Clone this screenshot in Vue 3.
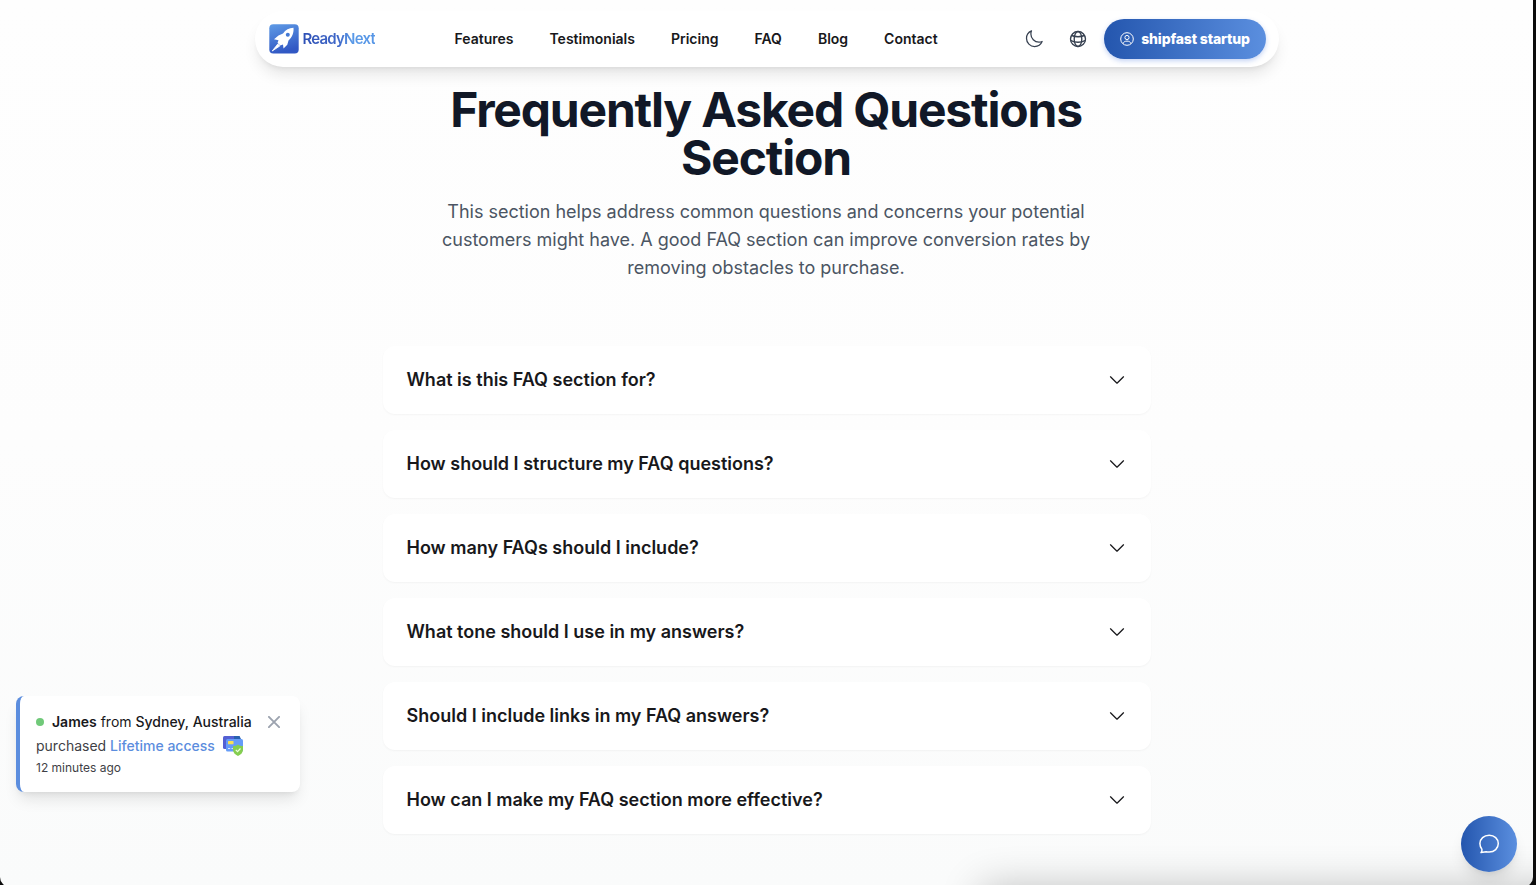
<script setup>
const links = ['Features', 'Testimonials', 'Pricing', 'FAQ', 'Blog', 'Contact']
const questions = [
  'What is this FAQ section for?',
  'How should I structure my FAQ questions?',
  'How many FAQs should I include?',
  'What tone should I use in my answers?',
  'Should I include links in my FAQ answers?',
  'How can I make my FAQ section more effective?',
]
</script>

<template>
  <div class="screen">
    <div class="page">
      <header class="nav">
        <a class="logo">
          <svg class="logo-mark" width="30" height="30" viewBox="0 0 30 30">
            <defs>
              <linearGradient id="mark" x1="0" y1="0" x2="0.3" y2="1">
                <stop offset="0" stop-color="#5f9be6" />
                <stop offset="1" stop-color="#3158c4" />
              </linearGradient>
            </defs>
            <rect x="0.3" y="0.3" width="29.4" height="29.2" rx="4" fill="url(#mark)" />
            <path d="M24.500 3.800C20 3.800 16.500 6 14 9.500L9.500 11.500L5 15.300L9.500 16.300L8.500 19L11.200 21.500L14 20.500L14.500 24.500L18.300 20.800L19.500 16.500C23 13.500 25 9 24.500 3.800Z" fill="#fff" />
            <path d="M8.800 20L3.200 27L10.800 22Z" fill="#fff" stroke="#fff" stroke-width="0.800" />
            <circle cx="18.800" cy="10.800" r="2" fill="#4379d5" />
          </svg>
          <span class="logo-text">ReadyNext</span>
        </a>
        <nav class="links">
          <a v-for="l in links" :key="l">{{ l }}</a>
        </nav>
        <div class="actions">
          <svg class="moon" width="20" height="20" viewBox="0 0 24 24" fill="none" stroke="#374151" stroke-width="1.5" stroke-linecap="round" stroke-linejoin="round">
            <path d="M21.752 15.002A9.720 9.720 0 0 1 18 15.750c-5.385 0-9.750-4.365-9.750-9.750 0-1.330.266-2.597.748-3.752A9.753 9.753 0 0 0 3 11.250C3 16.635 7.365 21 12.750 21a9.753 9.753 0 0 0 9.002-5.998Z" />
          </svg>
          <svg class="globe" width="18" height="18" viewBox="0 0 18 18" fill="none" stroke="#374151" stroke-width="1.350">
            <circle cx="9" cy="9" r="7.500" />
            <ellipse cx="9" cy="9" rx="3.800" ry="7.500" />
            <path d="M2.500 5.500c3.500 1.300 9.500 1.300 13 0M1.500 10.300c4.500 2.300 10.500 2.300 15 0" />
          </svg>
          <button class="account">
            <svg width="14" height="14" viewBox="0 0 14 14" fill="none" stroke="#fff" stroke-width="1">
              <circle cx="7" cy="7" r="6.300" />
              <circle cx="7" cy="5.500" r="2.100" />
              <path d="M3.200 11.600C3.500 9.900 5 9.100 7 9.100s3.500.800 3.800 2.500" />
            </svg>
            <span>shipfast startup</span>
          </button>
        </div>
      </header>

      <main class="faq">
        <h1>Frequently Asked Questions Section</h1>
        <p class="intro">
          This section helps address common questions and concerns your potential customers might have. A good FAQ section can improve conversion rates by removing obstacles to purchase.
        </p>
        <div class="list">
          <div v-for="q in questions" :key="q" class="item">
            <h3>{{ q }}</h3>
            <svg width="20" height="20" viewBox="0 0 20 20" fill="none" stroke="#18181b" stroke-width="1.250" stroke-linecap="round" stroke-linejoin="round">
              <path d="M3.500 6.800l6.500 6.400L16.500 6.800" />
            </svg>
          </div>
        </div>
      </main>

      <div class="under-shadow"></div>

      <aside class="toast">
        <div class="toast-body">
          <div class="line who"><i class="dot"></i><span class="copy"><b>James</b> from <em>Sydney, Australia</em></span></div>
          <div class="line what">
            <span class="copy">purchased <strong>Lifetime access</strong></span>
            <svg width="20" height="20" viewBox="0 0 20 20">
              <rect x="0" y="0" width="17" height="13" rx="1.500" fill="#5460d3" />
              <path d="M11 0h5.500L18 3h-7z" fill="#2862b0" />
              <rect x="3" y="3" width="17" height="12.500" rx="1.500" fill="#659cf8" />
              <rect x="5" y="5" width="5.500" height="3.200" rx="0.500" fill="#f7df55" />
              <path d="M5 12.500h2.200M8.500 12.500h2" stroke="#d5e5ff" stroke-width="1" />
              <path d="M15 8.500c1.500 1.100 3 1.500 5 1.500v3.500c0 3-2 5.200-5 6.500-3-1.300-5-3.500-5-6.500V10c2 0 3.500-.400 5-1.500Z" fill="#85ce50" />
              <path d="M12.800 13.900l1.700 1.700 3-3.100" fill="none" stroke="#efffe0" stroke-width="1.200" />
            </svg>
          </div>
          <div class="when">12 minutes ago</div>
        </div>
        <svg class="close" width="12" height="12" viewBox="0 0 12 12" stroke="#9ca3af" stroke-width="1.900" stroke-linecap="round">
          <path d="M.900.900l10.200 10.200M11.100.900L.900 11.100" />
        </svg>
      </aside>

      <button class="chat">
        <svg width="22" height="22" viewBox="0 0 22 22" fill="none" stroke="#fff" stroke-width="1.500" stroke-linejoin="round">
          <path d="M11.200 2.200c5.200 0 9.100 3.600 9.100 8.400s-3.900 8.400-9.100 8.400c-1.100 0-2 0-3-.200L3 19.600c.900-1.200 1.200-2.200.900-3.400C2.600 14.700 1.900 12.800 1.900 10.600c0-4.800 4-8.400 9.300-8.400Z" />
        </svg>
      </button>
    </div>
  </div>
</template>

<style>
body {
  margin: 0;
  background: #0c0c0c;
}
</style>

<style scoped>
.screen {
  width: 1536px;
  height: 885px;
  overflow: hidden;
  background: #0c0c0c;
  font-family: Inter, "Liberation Sans", sans-serif;
  color: #18181b;
}
.page {
  position: relative;
  box-sizing: border-box;
  width: 1533px;
  height: 887px;
  padding-top: 11px;
  overflow: hidden;
  border-radius: 0 0 10px 10px;
  background: linear-gradient(#fefefe, #fdfdfd 50%, #fafbfb);
}
.nav {
  position: relative;
  z-index: 2;
  box-sizing: border-box;
  display: flex;
  align-items: center;
  width: 1024px;
  height: 56px;
  margin: 0 auto;
  padding: 0 13px 0 14px;
  border-radius: 28px;
  background: #fff;
  box-shadow: 0 10px 15px -3px rgba(0, 0, 0, 0.1), 0 4px 6px -4px rgba(0, 0, 0, 0.1);
}
.logo {
  display: flex;
  align-items: center;
  gap: 4px;
  width: 186px;
}
.logo-text {
  font-size: 15px;
  font-weight: 600;
  letter-spacing: -0.8px;
  line-height: 20px;
  background: linear-gradient(90deg, #2e50b5 0%, #3f68c9 50%, #5a9ae8 68%, #5796e6 100%);
  background-clip: text;
  -webkit-background-clip: text;
  color: transparent;
}
.links {
  display: flex;
  gap: 36px;
  font-size: 14px;
  font-weight: 600;
  line-height: 20px;
}
.actions {
  display: flex;
  align-items: center;
  margin-left: auto;
}
.moon {
  margin-right: 25px;
}
.globe {
  margin-right: 17px;
}
.account {
  display: flex;
  align-items: center;
  justify-content: center;
  gap: 7px;
  width: 162px;
  height: 40px;
  padding: 0 0 0 1px;
  border: 0;
  border-radius: 20px;
  background: linear-gradient(90deg, #2456ae, #5b8fdf);
  box-shadow: 0 2px 5px rgba(60, 110, 220, 0.3);
  color: #fff;
  font: 800 14px/20px Inter, sans-serif;
  letter-spacing: -0.15px;
}
.faq {
  display: flex;
  flex-direction: column;
  align-items: center;
  padding-top: 19px;
}
h1 {
  width: 673px;
  margin: 0 1px 0 0;
  text-align: center;
  font-size: 48px;
  font-weight: 700;
  line-height: 48px;
  letter-spacing: -1.2px;
  color: #111827;
}
.intro {
  width: 672px;
  margin: 16px 1px 64px 0;
  text-align: center;
  font-size: 18px;
  line-height: 28px;
  color: #4b5563;
}
.list {
  display: grid;
  gap: 16px;
  width: 768px;
}
.item {
  box-sizing: border-box;
  display: flex;
  align-items: center;
  justify-content: space-between;
  height: 68px;
  padding: 0 24px;
  border-radius: 12px;
  background: #fff;
  box-shadow: 0 1px 2px rgba(0, 0, 0, 0.04);
}
h3 {
  margin: 0;
  font-size: 18px;
  font-weight: 600;
  line-height: 28px;
}
.under-shadow {
  position: absolute;
  left: 985px;
  top: 891px;
  width: 700px;
  height: 60px;
  box-shadow: 0 0 40px 4px rgba(0, 0, 0, 0.24);
}
.toast {
  position: absolute;
  left: 16px;
  top: 696px;
  box-sizing: border-box;
  display: flex;
  justify-content: space-between;
  width: 284px;
  height: 96px;
  padding: 14px 20px 0 16px;
  border-left: 4px solid #5b8dde;
  border-radius: 8px;
  background: #fff;
  box-shadow: 0 10px 15px -3px rgba(0, 0, 0, 0.1), 0 4px 6px -4px rgba(0, 0, 0, 0.1);
}
.line {
  display: flex;
  align-items: center;
  height: 24px;
  font-size: 14px;
  white-space: nowrap;
}
.copy {
  padding-bottom: 2px;
}
.dot {
  width: 8px;
  height: 8px;
  margin-right: 8px;
  border-radius: 50%;
  background: #70c979;
}
b {
  font-weight: 600;
}
em {
  font-style: normal;
  font-weight: 500;
}
.what {
  gap: 8px;
  color: #3f3f46;
}
strong {
  font-weight: 500;
  color: #5b8dde;
}
.when {
  font-size: 12px;
  line-height: 20px;
  color: #3f3f46;
}
.close {
  margin-top: 6px;
}
.chat {
  position: absolute;
  left: 1461px;
  top: 816px;
  display: grid;
  place-items: center;
  width: 56px;
  height: 56px;
  padding: 0;
  border: 0;
  border-radius: 50%;
  background: linear-gradient(90deg, #2456ae, #5b8fdf);
  box-shadow: 0 10px 15px -3px rgba(0, 0, 0, 0.1), 0 4px 6px -4px rgba(0, 0, 0, 0.1);
}
</style>
